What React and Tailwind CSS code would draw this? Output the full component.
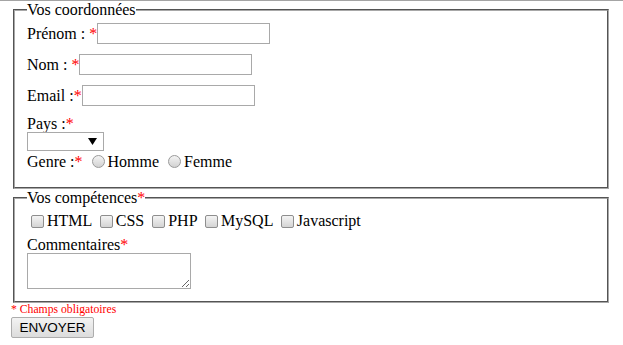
import React from "react";

const Star = () => <span className="text-[#ff0000]">*</span>;

const Radio = () => (
  <span className="inline-block w-[13px] h-[13px] ml-[5px] mr-[3px] rounded-full border border-[#9a9a9a] bg-gradient-to-b from-[#f4f4f4] to-[#d2d2d2] shrink-0" />
);

const Check = () => (
  <span className="inline-block w-[13px] h-[13px] ml-[4px] mr-[3px] rounded-[2px] border border-[#8e8e8e] bg-gradient-to-b from-[#f4f4f4] to-[#d4d4d4] shrink-0" />
);

const TextInput = () => (
  <span className="inline-block w-[173px] h-[21px] border border-[#a9a9a9] bg-white" />
);

export default function App() {
  return (
    <div className="min-h-screen bg-white border-t border-[#a4a4a4] pl-[11px] pr-[12px] font-['Liberation_Serif',serif] text-[16px] leading-[18px] text-black">
      <fieldset className="mx-[2px] border-2 [border-style:groove] border-[#a8a8a8] px-[12px] pt-[4px] pb-[16px]">
        <legend className="p-0">Vos coordonnées</legend>
        <div className="flex items-center h-[21px] mb-[10px]">
          <span className="whitespace-pre">Prénom : </span>
          <Star />
          <TextInput />
        </div>
        <div className="flex items-center h-[21px] mb-[10px]">
          <span className="whitespace-pre">Nom : </span>
          <Star />
          <TextInput />
        </div>
        <div className="flex items-center h-[21px]">
          <span className="whitespace-pre">Email :</span>
          <Star />
          <TextInput />
        </div>
        <div className="mt-[9px] h-[18px]">
          Pays :<Star />
        </div>
        <div className="-mt-[1px] relative w-[77px] h-[19px] border border-[#a9a9a9] bg-white">
          <svg className="absolute right-[6px] top-[5px]" width="9" height="7" viewBox="0 0 9 7">
            <polygon points="0,0 9,0 4.5,7" fill="#000" />
          </svg>
        </div>
        <div className="flex items-center h-[19px] mt-[1px]">
          <span className="whitespace-pre">Genre :</span>
          <Star />
          <span className="whitespace-pre"> </span>
          <Radio />
          <span className="whitespace-pre">Homme </span>
          <Radio />
          <span>Femme</span>
        </div>
      </fieldset>

      <fieldset className="mx-[2px] border-2 [border-style:groove] border-[#a8a8a8] px-[12px] pt-[5px] pb-[12px]">
        <legend className="p-0">
          Vos compétences<Star />
        </legend>
        <div className="flex items-center h-[18px]">
          <Check />
          <span className="whitespace-pre">HTML </span>
          <Check />
          <span className="whitespace-pre">CSS </span>
          <Check />
          <span className="whitespace-pre">PHP </span>
          <Check />
          <span className="whitespace-pre">MySQL </span>
          <Check />
          <span>Javascript</span>
        </div>
        <div className="mt-[6px] h-[17px]">
          Commentaires<Star />
        </div>
        <textarea className="block w-[164px] h-[36px] border border-[#a9a9a9] bg-white resize" />
      </fieldset>

      <div className="text-[11.7px] leading-[14px] text-[#ff0000]">* Champs obligatoires</div>
      <button className="flex items-center justify-center w-[83px] h-[21px] border border-[#adadad] rounded-[2px] bg-gradient-to-b from-[#f3f3f3] to-[#dcdcdc] font-['Liberation_Sans',sans-serif] text-[13.5px] text-black">
        ENVOYER
      </button>
    </div>
  );
}
